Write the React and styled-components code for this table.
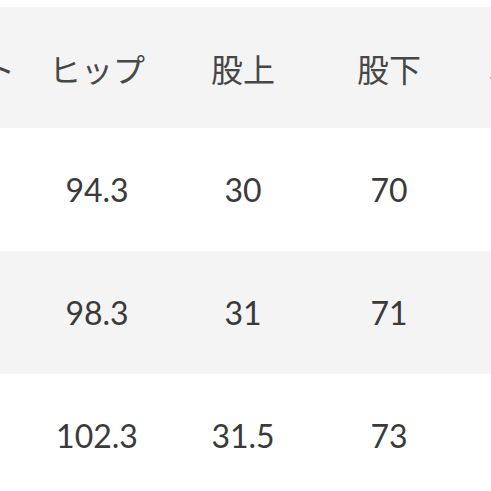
import React from "react";
import styled, { createGlobalStyle } from "styled-components";

const Global = createGlobalStyle`
  html, body { margin: 0; padding: 0; background: #ffffff; }
  body { overflow: hidden; }
`;

const Viewport = styled.div`
  width: 491px;
  height: 491px;
  overflow: hidden;
  background: #ffffff;
  padding-top: 7px;
  box-sizing: border-box;
`;

const Table = styled.div`
  display: flex;
  flex-direction: column;
  width: 730px;
  margin-left: -122px;
  font-family: Lato, "Noto Sans CJK JP", sans-serif;
`;

const Row = styled.div`
  display: grid;
  grid-template-columns: repeat(5, 146px);
  height: ${(p) => p.$h}px;
  background: ${(p) => (p.$shaded ? "#f4f4f4" : "#ffffff")};
  align-items: center;
`;

const HeadCell = styled.div`
  text-align: center;
  font-family: "Noto Sans CJK JP", sans-serif;
  font-size: 32px;
  font-weight: 400;
  color: #474747;
  line-height: 1;
  white-space: nowrap;
  padding-left: ${(p) => p.$shift || 0}px;
`;

const Cell = styled.div`
  text-align: center;
  font-size: 32px;
  font-weight: 400;
  color: #3a3a3a;
  line-height: 1;
  white-space: nowrap;
`;

const headers = ["ウエスト", "ヒップ", "股上", "股下", "わたり"];
const rows = [
  ["70", "94.3", "30", "70", "31"],
  ["74", "98.3", "31", "71", "32"],
  ["78", "102.3", "31.5", "73", "33"],
];

export default function App() {
  return (
    <Viewport>
      <Global />
      <Table>
        <Row $h={121} $shaded>
          {headers.map((h, i) => (
            <HeadCell key={h} $shift={i === 4 ? 3 : 0}>
              {h}
            </HeadCell>
          ))}
        </Row>
        {rows.map((r, i) => (
          <Row key={i} $h={123} $shaded={i % 2 === 1}>
            {r.map((v, j) => (
              <Cell key={j}>{v}</Cell>
            ))}
          </Row>
        ))}
      </Table>
    </Viewport>
  );
}
